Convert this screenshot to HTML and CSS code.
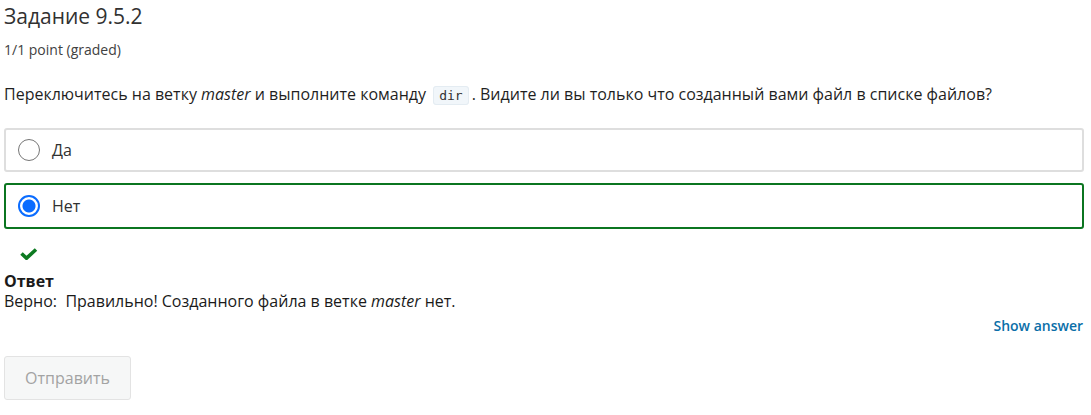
FILE: index.html
```html
<!DOCTYPE html>
<html lang="ru">
<head>
<meta charset="utf-8">
<link rel="stylesheet" href="styles.css">
</head>
<body>
<div class="problem">
  <h3 class="title">Задание 9.5.2</h3>
  <div class="points">1/1 point (graded)</div>
  <p class="question">Переключитесь на ветку <em>master</em> и выполните команду <code>dir</code>. Видите ли вы только что созданный вами файл в списке файлов?</p>
  <div class="choices">
    <label class="choice">
      <span class="radio"></span>
      <span class="choice-text">Да</span>
    </label>
    <label class="choice correct">
      <span class="radio checked"></span>
      <span class="choice-text">Нет</span>
    </label>
  </div>
  <div class="status">
    <svg width="18" height="12" viewBox="0 0 18 12"><path d="M1.5 5.5 L6.5 10.2 L16 1.5" fill="none" stroke="#0d7a21" stroke-width="3.6" stroke-linejoin="miter"/></svg>
  </div>
  <div class="feedback">
    <div class="feedback-label">Ответ</div>
    <div class="feedback-text">Верно:&nbsp; Правильно! Созданного файла в ветке <em>master</em> нет.</div>
  </div>
  <div class="actions-right"><a class="show-answer">Show answer</a></div>
  <div class="actions">
    <button class="submit" disabled>Отправить</button>
  </div>
</div>
</body>
</html>
```
FILE: styles.css
```css
html, body {
  margin: 0;
  padding: 0;
  background: #fff;
}
body {
  font-family: "Open Sans", "Noto Sans", sans-serif;
  color: #313131;
}
.problem {
  padding: 0 7px 0 4px;
}
.title {
  margin: 0;
  padding-top: 1px;
  font-size: 21px;
  line-height: 30px;
  font-weight: 400;
  color: #313131;
}
.points {
  margin-top: 9px;
  font-size: 14px;
  line-height: 20px;
  color: #414141;
}
.question {
  margin: 22px 0 0;
  font-size: 16px;
  line-height: 24px;
  color: #1f1f1f;
}
code {
  font-family: "DejaVu Sans Mono", "Liberation Mono", monospace;
  font-size: 13px;
  background: #f1f6fa;
  border: 1px solid #e4ecf2;
  border-radius: 3px;
  padding: 1px 5px;
  margin: 0 3px 0 3px;
  color: #313131;
}
.choices {
  margin-top: 20px;
  display: flex;
  flex-direction: column;
  gap: 11px;
}
.choice {
  display: flex;
  align-items: center;
  height: 40px;
  padding: 0 12px;
  border: 2px solid #dedede;
  border-radius: 3px;
  gap: 12px;
}
.choice.correct {
  border-color: #0b7520;
  height: 42px;
}
.radio {
  width: 22px;
  height: 22px;
  border: 1px solid #767676;
  border-radius: 50%;
  box-sizing: border-box;
  flex: none;
}
.radio.checked {
  border: 2px solid #0a6cff;
  background: radial-gradient(circle, #0a6cff 0 6px, #fff 7px);
}
.choice-text {
  font-size: 16px;
  color: #313131;
}
.status {
  margin-top: 19px;
  padding-left: 16px;
  height: 12px;
}
.status svg {
  display: block;
}
.feedback {
  margin-top: 11px;
  font-size: 16px;
  line-height: 20px;
  color: #1a1a1a;
}
.feedback-label {
  font-weight: 700;
}
.actions-right {
  display: flex;
  justify-content: flex-end;
  margin-top: 5px;
  line-height: 20px;
}
.show-answer {
  font-size: 14px;
  font-weight: 600;
  color: #0a6ea8;
  padding-right: 1px;
}
.actions {
  margin-top: 20px;
}
.submit {
  font-family: inherit;
  font-size: 16px;
  color: #a3a3a3;
  background: #f6f7f7;
  border: 1px solid #e3e3e3;
  border-radius: 3px;
  width: 127px;
  height: 44px;
}
```
